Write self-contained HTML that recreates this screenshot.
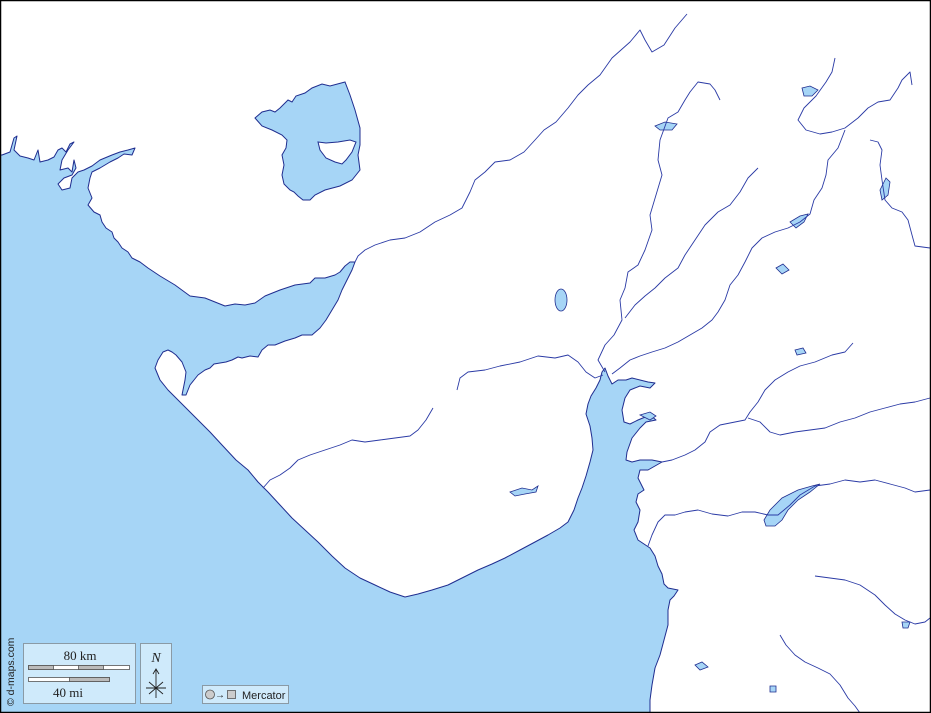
<!DOCTYPE html>
<html><head><meta charset="utf-8"><style>
html,body{margin:0;padding:0;background:#fff}
svg{display:block}
text{font-family:"Liberation Serif",serif}
</style></head><body>
<svg width="931" height="713" viewBox="0 0 931 713" xmlns="http://www.w3.org/2000/svg">
<rect x="0" y="0" width="931" height="713" fill="#fff"/>
<!-- Sea -->
<path fill="#a6d5f6" stroke="#1f2d8f" stroke-width="1" stroke-linejoin="round" d="
M0,155 L2,155 L10,152 L14,138 L17,136 L14,150 L20,156 L28,158 L34,160 L38,150 L40,162 L48,160 L54,157 L58,150 L62,148 L66,152 L70,144 L74,142 L68,150 L62,160 L60,170 L68,168 L72,172 L74,160 L76,168 L72,175 L64,178 L58,184 L62,190 L70,188 L72,178 L78,172 L84,170 L92,166 L100,160 L112,155 L120,152 L128,150 L135,148 L132,155 L124,154 L118,158 L110,162 L100,168 L92,172 L90,178 L88,188 L92,198 L88,205 L94,212 L100,215 L102,222 L106,228 L112,232 L114,238 L118,242 L122,248 L128,252 L132,258 L140,262 L148,268 L160,276 L175,285 L190,296 L205,298 L215,302 L225,306 L235,304 L245,305 L255,303 L265,296 L280,290 L295,285 L310,283 L315,278 L325,278 L335,275 L340,272 L345,266 L350,262 L355,262 L352,270 L348,278 L342,290 L338,300 L332,310 L326,320 L320,328 L312,335 L302,335 L295,338 L285,341 L275,345 L268,345 L262,350 L258,357 L250,356 L242,358 L238,357 L232,360 L226,362 L220,363 L214,364 L210,368 L205,370 L198,375 L194,380 L190,385 L186,395 L182,395 L185,380 L186,372 L182,362 L176,355 L172,352 L168,350 L163,352 L158,360 L155,368 L160,380 L168,390 L178,400 L190,412 L200,422 L210,432 L222,445 L236,460 L248,470 L258,482 L268,492 L280,505 L292,518 L305,530 L318,542 L332,556 L345,568 L360,578 L375,585 L390,592 L405,597 L418,594 L432,590 L448,585 L462,578 L478,570 L492,564 L505,558 L520,550 L535,542 L548,535 L560,528 L568,522 L574,510 L578,498 L582,488 L586,476 L590,462 L593,450 L592,438 L590,426 L586,414 L588,404 L591,396 L596,388 L600,380 L602,372 L605,368 L608,376 L612,384 L618,380 L626,380 L632,378 L640,380 L648,382 L655,383 L650,388 L640,386 L630,390 L625,398 L622,410 L624,422 L630,424 L638,420 L650,415 L656,420 L646,422 L640,428 L632,438 L627,452 L626,460 L632,462 L640,460 L652,460 L662,462 L655,466 L648,470 L640,470 L638,478 L641,484 L644,490 L638,494 L636,502 L640,510 L638,522 L634,530 L638,540 L644,544 L650,548 L655,556 L658,566 L662,574 L664,584 L668,588 L678,590 L674,596 L670,600 L668,610 L668,625 L664,640 L660,655 L655,668 L652,685 L650,700 L650,713 L0,713 Z"/>
<!-- Great Rann -->
<path fill="#a6d5f6" stroke="#1f2d8f" stroke-width="1" d="M255,118 L262,112 L270,110 L275,112 L280,108 L288,100 L292,102 L296,96 L305,93 L312,88 L322,84 L330,86 L345,82 L350,95 L355,110 L360,128 L360,145 L358,155 L360,170 L352,180 L340,186 L325,190 L315,195 L310,200 L303,200 L298,196 L294,192 L290,190 L284,184 L282,175 L284,165 L282,155 L286,148 L287,140 L282,135 L272,130 L262,126 Z"/>
<path fill="#fff" stroke="#1f2d8f" stroke-width="1" d="M318,142 L326,143 L338,142 L350,140 L356,142 L352,152 L346,160 L342,164 L335,162 L326,158 L320,150 Z"/>
<!-- Lakes -->
<g fill="#a6d5f6" stroke="#1f2d8f" stroke-width="0.8">
<ellipse cx="561" cy="300" rx="6" ry="11"/>
<path d="M655,126 L665,122 L677,124 L672,130 L660,130 Z"/>
<path d="M802,88 L810,86 L818,90 L812,96 L804,96 Z"/>
<path d="M776,268 L783,264 L789,270 L782,274 Z"/>
<path d="M795,350 L803,348 L806,353 L797,355 Z"/>
<path d="M510,492 L522,488 L532,490 L538,486 L536,492 L525,494 L515,496 Z"/>
<path d="M764,520 L770,510 L782,498 L798,490 L812,486 L820,484 L810,492 L798,500 L788,510 L782,520 L775,526 L766,526 Z"/>
<path d="M880,190 L886,178 L890,182 L888,195 L882,200 Z"/>
<path d="M790,222 L800,216 L808,214 L804,222 L796,228 Z"/>
<path d="M695,665 L702,662 L708,667 L700,670 Z"/>
<path d="M770,686 L776,686 L776,692 L770,692 Z"/>
<path d="M902,622 L910,622 L908,628 L903,628 Z"/>
<path d="M640,415 L650,412 L656,416 L650,420 Z"/>
</g>
<!-- Rivers -->
<g fill="none" stroke="#2a3aa5" stroke-width="0.9" stroke-linejoin="round">
<polyline points="687,14 675,28 664,45 652,52 645,40 640,30 630,42 612,58 600,75 588,85 578,95 568,108 556,122 544,130 535,140 524,152 510,160 495,162 485,172 475,180 470,192 462,208 450,215 435,222 420,232 405,238 390,240 375,245 365,250 358,256 355,262"/>
<polyline points="457,390 460,378 468,372 485,370 500,366 520,362 538,356 555,358 568,355 578,362 586,372 595,378 603,375"/>
<polyline points="433,408 426,420 418,430 410,436 395,438 380,440 365,442 352,440 340,445 325,450 310,455 298,460 290,468 280,475 270,480 263,488"/>
<polyline points="720,100 715,90 710,84 698,82 690,92 685,100 678,112 668,118 660,140 658,160 662,175 656,195 650,215 652,230 645,250 638,265 628,272 625,288 620,300 622,320 614,335 605,345 598,360 605,372"/>
<polyline points="758,168 748,178 740,192 730,205 718,212 705,225 695,240 685,255 678,268 665,278 655,288 645,296 635,305 625,318"/>
<polyline points="835,58 832,72 826,82 816,96 804,108 798,120 806,130 820,134 832,132 845,128 858,118 868,108 878,102 890,100 898,88 902,80 910,72 912,85"/>
<polyline points="845,130 838,148 828,160 826,175 822,188 814,200 810,214 800,222 788,228 775,232 762,238 752,248 745,262 738,275 730,285 725,300 718,312 712,320 702,328 690,335 678,342 665,348 652,352 640,356 630,360 620,368 612,374"/>
<polyline points="870,140 878,142 882,150 880,165 882,180 885,200 892,208 902,212 908,220 912,235 915,246 930,248"/>
<polyline points="853,343 845,352 832,355 815,362 800,366 788,372 775,380 765,390 758,402 750,412 745,420 735,422 720,425 710,432 705,442 695,450 685,455 672,460 662,462"/>
<polyline points="930,398 915,402 900,404 885,408 870,412 855,418 840,422 825,428 810,430 795,432 780,435 770,432 760,422 748,418"/>
<polyline points="930,490 915,492 905,488 890,484 875,480 860,482 845,480 830,484 815,486 800,495 790,505 778,515 768,515 755,512 742,512 728,516 712,514 698,510 685,512 675,515 665,515 658,522 652,535 648,546"/>
<polyline points="815,576 830,578 845,580 860,585 875,595 885,605 895,614 905,620 915,624 925,622 930,618"/>
<polyline points="780,635 786,645 795,655 805,662 818,668 830,674 840,685 848,698 855,706 860,713"/>
</g>
<!-- Legend -->
<text x="14" y="706" transform="rotate(-90 14 706)" font-family="Liberation Sans, sans-serif" font-size="10.5" fill="#222" style="font-family:'Liberation Sans',sans-serif">© d-maps.com</text>
<rect x="23.5" y="643.5" width="112" height="60" fill="#cfeafb" stroke="#8a9aa5"/>
<text x="80" y="660" text-anchor="middle" font-size="13" fill="#222">80 km</text>
<rect x="28.5" y="665.5" width="101" height="4" fill="#fff" stroke="#555" stroke-width="0.8"/>
<rect x="28.5" y="665.5" width="25" height="4" fill="#bbb" stroke="#555" stroke-width="0.8"/>
<rect x="78.5" y="665.5" width="25" height="4" fill="#bbb" stroke="#555" stroke-width="0.8"/>
<rect x="28.5" y="677.5" width="81" height="4" fill="#fff" stroke="#555" stroke-width="0.8"/>
<rect x="69.5" y="677.5" width="40" height="4" fill="#bbb" stroke="#555" stroke-width="0.8"/>
<text x="68" y="697" text-anchor="middle" font-size="13" fill="#222">40 mi</text>
<rect x="140.5" y="643.5" width="31" height="60" fill="#cfeafb" stroke="#8a9aa5"/>
<text x="156" y="662" text-anchor="middle" font-size="14" font-style="italic" fill="#222">N</text>
<g stroke="#222" stroke-width="0.9" fill="none">
<line x1="156" y1="670" x2="156" y2="698"/>
<polyline points="153,674 156,669 159,674"/>
<line x1="146" y1="688" x2="166" y2="688"/>
<line x1="149" y1="682" x2="163" y2="694"/>
<line x1="163" y1="682" x2="149" y2="694"/>
</g>
<rect x="202.5" y="685.5" width="86" height="18" fill="#cfeafb" stroke="#8a9aa5"/>
<circle cx="210" cy="694.5" r="4.5" fill="#ccc" stroke="#555" stroke-width="0.8"/>
<text x="215" y="698" font-size="10" fill="#222">→</text>
<rect x="227.5" y="690.5" width="8" height="8" fill="#ccc" stroke="#555" stroke-width="0.8"/>
<text x="242" y="699" font-size="11" fill="#222" style="font-family:'Liberation Sans',sans-serif">Mercator</text>
<rect x="0.5" y="0.5" width="930" height="712" fill="none" stroke="#000" stroke-width="1.5"/>
</svg>
</body></html>
